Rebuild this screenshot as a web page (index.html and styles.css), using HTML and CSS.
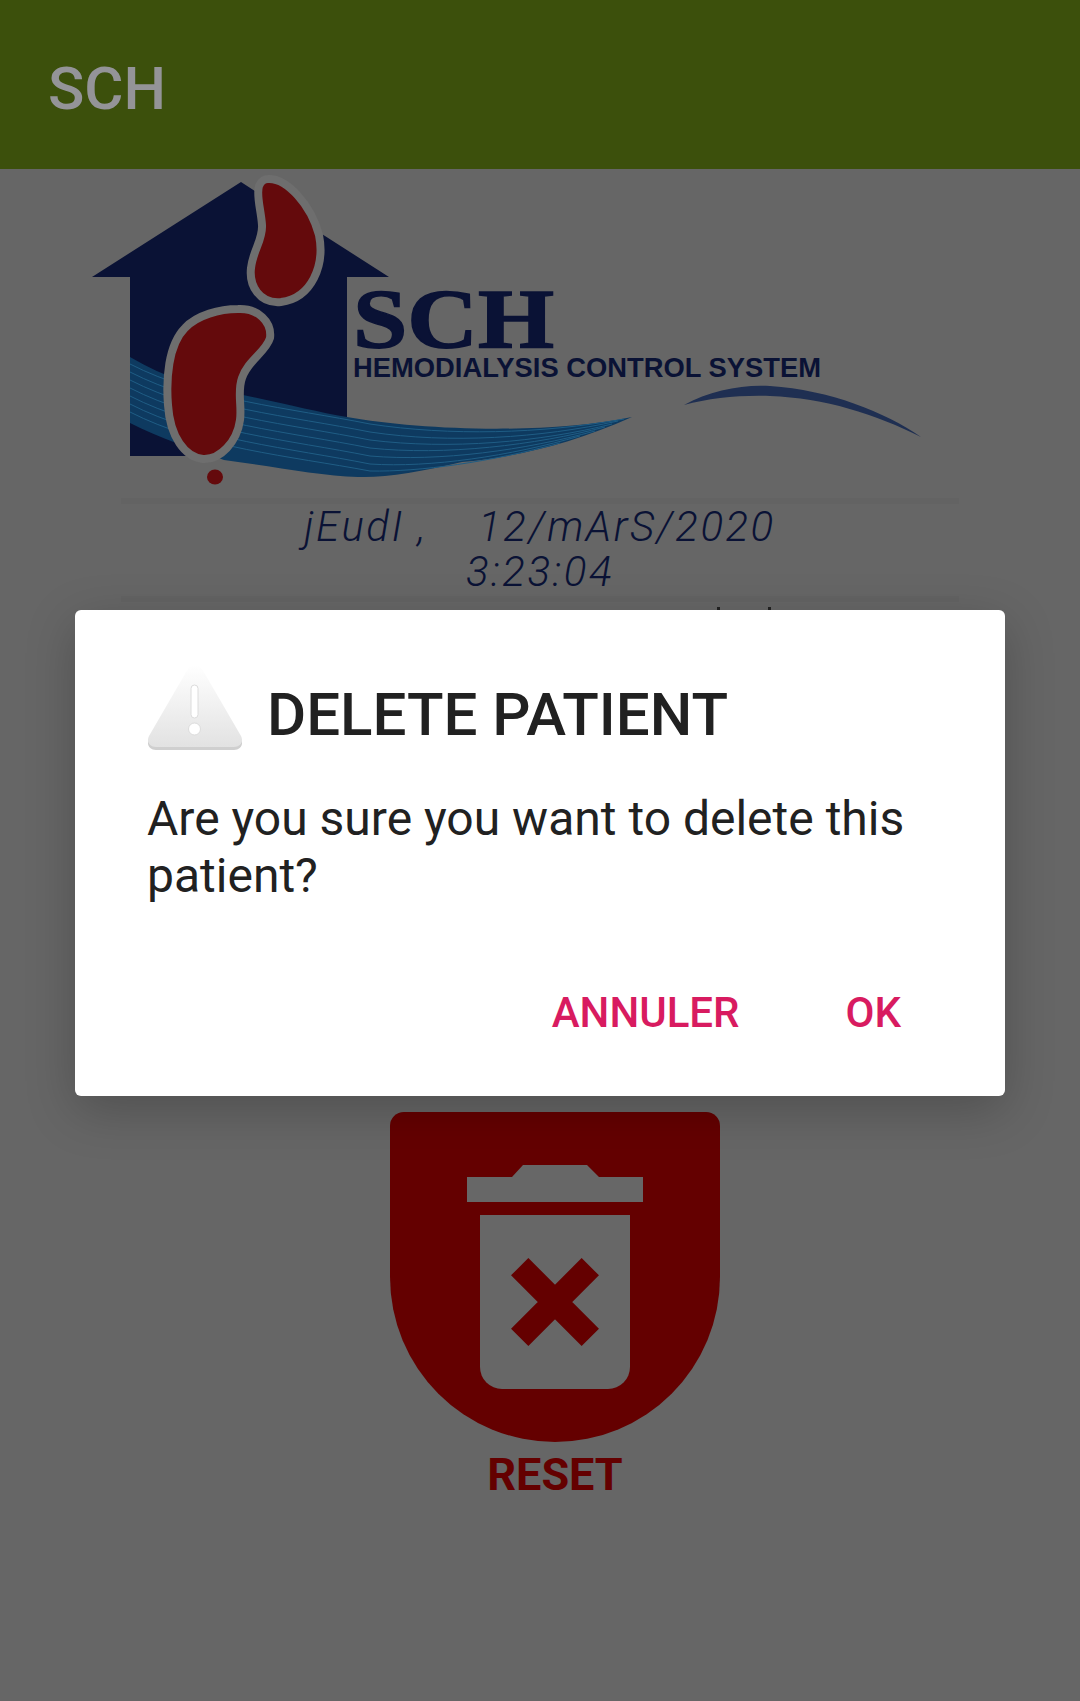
FILE: index.html
```html
<!DOCTYPE html>
<html lang="en">
<head>
<meta charset="UTF-8">
<meta name="viewport" content="width=device-width, initial-scale=1.0">
<title>SCH</title>
<link rel="stylesheet" href="styles.css">
</head>
<body>

<header class="appbar">
  <h1 class="appbar-title">SCH</h1>
</header>

<main class="content">
  <svg class="logo" viewBox="60 170 900 330" width="900" height="330">
    <path fill="#0a1235" d="M241 182 L325 236 L389 277 L347 277 L347 456 L130 456 L130 277 L92 277 Z"/>
    <path fill="#0e3a60" d="M130 357 C165 378 200 388 232 393 C280 402 315 412 347 417 C420 430 545 435 632 417 C570 445 510 458 462 462 C420 472 385 478 358 477 C320 476 270 466 224 460 C190 448 160 438 130 423 Z"/>
    <g fill="none" stroke="#1f5d85" stroke-width="1">
      <path d="M130 364 C200 400 290 408 370 424 C450 436 540 434 624 419"/>
      <path d="M130 372 C200 408 290 416 370 432 C450 444 540 438 618 421"/>
      <path d="M130 380 C200 416 290 424 370 440 C450 450 540 442 612 424"/>
      <path d="M130 388 C200 424 290 432 370 448 C445 456 535 445 605 427"/>
      <path d="M130 396 C200 432 290 440 370 456 C440 462 525 450 595 431"/>
      <path d="M130 404 C200 440 290 448 370 464 C430 468 510 456 580 436"/>
      <path d="M130 412 C200 448 290 456 370 471 C420 472 490 462 560 443"/>
    </g>
    <path fill="#1f2f52" d="M684 405 C710 390 745 384 770 386 C830 390 885 412 921 437 C875 414 825 398 770 396 C740 395 710 398 684 405 Z"/>
    <path fill="#640a0c" stroke="#6e6e6e" stroke-width="8" d="M268 179 C287 178 311 205 319 235 C325 265 312 298 281 302 C259 304 249 285 251 268 C253 250 263 240 262 225 C261 210 256 195 259 186 C261 181 265 179 268 179 Z"/>
    <path fill="#640a0c" stroke="#6e6e6e" stroke-width="8" d="M238 309 C258 308 272 322 270 338 C266 352 248 360 242 378 C237 392 242 405 240 420 C237 442 220 460 203 459 C185 457 170 437 168 405 C166 380 168 345 185 328 C197 315 220 309 238 309 Z"/>
    <ellipse fill="#640a0c" cx="215" cy="477" rx="8" ry="7.5"/>
    <text class="logo-name" x="353" y="348" textLength="201" lengthAdjust="spacingAndGlyphs">SCH</text>
    <text class="logo-sub" x="353" y="377" textLength="468" lengthAdjust="spacingAndGlyphs">HEMODIALYSIS CONTROL SYSTEM</text>
  </svg>

  <div class="clock">
    <div class="clock-line">jEudI ,    12/mArS/2020</div>
    <div class="clock-line">3:23:04</div>
  </div>

  <div class="peek"><span></span><span></span></div>

  <div class="reset">
    <svg class="reset-icon" viewBox="0 0 330 330" width="330" height="330">
      <path fill="#640000" d="M14 0 H316 A14 14 0 0 1 330 14 V165 A165 165 0 0 1 0 165 V14 A14 14 0 0 1 14 0 Z"/>
      <path fill="#676767" d="M77 65 H122 L133 53 H197 L209 65 H253 V90 H77 Z"/>
      <path fill="#676767" d="M90 103 H240 V255 A22 22 0 0 1 218 277 H112 A22 22 0 0 1 90 255 Z"/>
      <path stroke="#640000" stroke-width="24.5" d="M129.7 154.7 L200.3 225.3 M200.3 154.7 L129.7 225.3"/>
    </svg>
    <div class="reset-label">RESET</div>
  </div>
</main>

<section class="dialog">
  <div class="dialog-head">
    <svg class="dialog-icon" viewBox="0 0 96 85" width="96" height="85">
      <defs>
        <linearGradient id="warnFill" x1="0" y1="0" x2="0" y2="1">
          <stop offset="0" stop-color="#ffffff"/>
          <stop offset="1" stop-color="#e2e2e2"/>
        </linearGradient>
      </defs>
      <path fill="#cfcfcf" d="M48 2 C53 2 56 7 58 11 L94 74 C97 80 93 85 87 85 H9 C3 85 -1 80 2 74 L38 11 C40 7 43 2 48 2 Z"/>
      <path fill="url(#warnFill)" d="M48 0 C53 0 56 5 58 9 L94 71 C97 77 93 82 87 82 H9 C3 82 -1 77 2 71 L38 9 C40 5 43 0 48 0 Z"/>
      <rect fill="#ffffff" stroke="#dcdcdc" x="44" y="20" width="7" height="33" rx="3.5"/>
      <circle fill="#ffffff" stroke="#dcdcdc" cx="47.5" cy="64" r="6"/>
    </svg>
    <h2 class="dialog-title">DELETE PATIENT</h2>
  </div>
  <p class="dialog-text">Are you sure you want to delete this patient?</p>
  <div class="dialog-actions">
    <button class="dialog-btn">ANNULER</button>
    <button class="dialog-btn">OK</button>
  </div>
</section>

</body>
</html>
```

FILE: styles.css
```css
/* page */
body {
  margin: 0;
  height: 1701px;
  overflow: hidden;
  position: relative;
  background-color: #666666;
  font-family: Roboto, "Liberation Sans", sans-serif;
}

/* top bar */
.appbar {
  height: 169px;
  box-sizing: border-box;
  padding: 8px 0 0 48px;
  display: flex;
  align-items: center;
  background-color: #3c500c;
}
.appbar-title {
  margin: 0;
  font-size: 60px;
  font-weight: 500;
  color: #949498;
}

/* main column */
.content {
  display: flex;
  flex-direction: column;
  align-items: center;
}
.logo {
  display: block;
  margin-top: 1px;
  align-self: flex-start;
  margin-left: 60px;
}
.logo-name {
  font-family: "Liberation Serif", serif;
  font-weight: 700;
  font-size: 85px;
  fill: #0a1235;
  stroke: #0a1235;
  stroke-width: 1.5px;
}
.logo-sub {
  font-family: "Liberation Sans", sans-serif;
  font-weight: 700;
  font-size: 28px;
  fill: #0a1235;
}

.clock {
  width: 838px;
  box-sizing: border-box;
  padding-bottom: 2px;
  border-top: 6px solid #636363;
  border-bottom: 6px solid #636363;
  margin-top: -2px;
}
.clock-line {
  height: 45px;
  line-height: 45px;
  text-align: center;
  white-space: pre;
  font-size: 42px;
  font-weight: 300;
  font-style: italic;
  letter-spacing: 2.5px;
  color: #0a1235;
}

.peek {
  display: flex;
  gap: 48px;
  height: 8px;
  margin-left: 408px;
  margin-top: 5px;
}
.peek span {
  width: 3px;
  height: 4px;
  background-color: #222222;
}

.reset {
  margin-top: 497px;
  display: flex;
  flex-direction: column;
  align-items: center;
  margin-left: 30px;
}
.reset-icon {
  display: block;
}
.reset-label {
  margin-top: 6px;
  font-size: 45px;
  line-height: 54px;
  font-weight: 700;
  color: #640000;
}

/* dialog lies over the page */
.dialog {
  position: absolute;
  left: 75px;
  top: 610px;
  width: 930px;
  height: 486px;
  box-sizing: border-box;
  padding: 55px 94px 0 72px;
  border-radius: 6px;
  background-color: #ffffff;
  box-shadow: 0 14px 50px rgba(0, 0, 0, 0.22);
}
.dialog-head {
  display: flex;
  align-items: center;
  gap: 24px;
}
.dialog-icon {
  display: block;
}
.dialog-title {
  margin: 14px 0 0;
  font-size: 60px;
  font-weight: 500;
  color: #212121;
}
.dialog-text {
  margin: 40px 0 0;
  font-size: 48px;
  line-height: 57px;
  color: #212121;
}
.dialog-actions {
  margin-top: 84px;
  padding-right: 10px;
  display: flex;
  justify-content: flex-end;
  gap: 106px;
}
.dialog-btn {
  padding: 0;
  border: 0;
  background: none;
  font-family: Roboto, "Liberation Sans", sans-serif;
  font-size: 42px;
  line-height: 50px;
  font-weight: 500;
  color: #d81b60;
}
```
